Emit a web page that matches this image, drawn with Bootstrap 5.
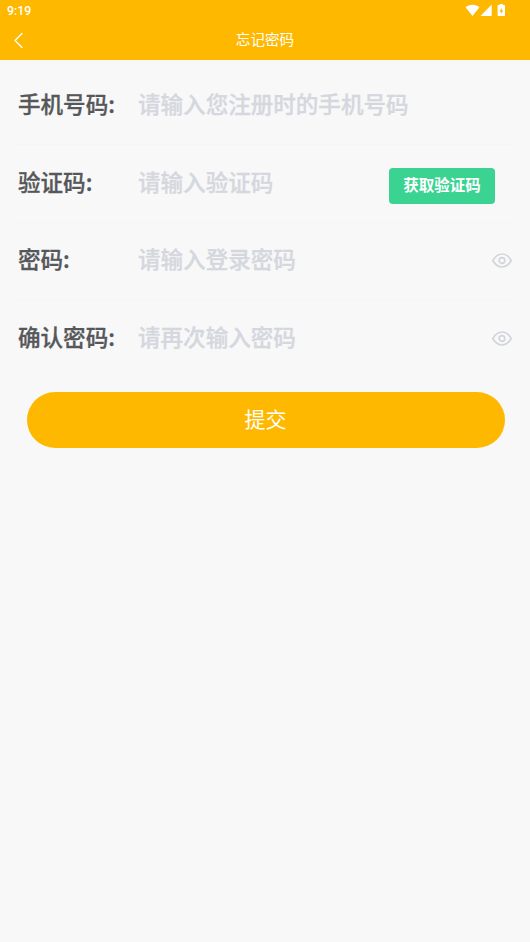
<!DOCTYPE html>
<html lang="zh-CN">
<head>
<meta charset="utf-8">
<meta name="viewport" content="width=device-width, initial-scale=1">
<title>忘记密码</title>
<link href="https://cdn.jsdelivr.net/npm/bootstrap@5.3.0/dist/css/bootstrap.min.css" rel="stylesheet">
<style>
  body { background: #f8f8f8; font-family: "Noto Sans CJK SC", sans-serif; min-height: 100vh; }
  .app-header { background: #ffb800; height: 60px; }
  .status-line { height: 21px; padding: 0 24px 0 7px; font: 500 12.4px/22px Roboto, sans-serif; }
  .status-icons svg { display: block; }
  .title-line { display: grid; grid-template-columns: 40px 1fr 40px; height: 39px; padding-bottom: 1px; }
  .page-title { font-size: 14.6px; line-height: 20px; padding-bottom: 2px; }
  .back-btn { margin-left: 13px; line-height: 0; }
  .reset-form { padding-top: 7.6px; }
  .field-row { height: 77.7px; margin: 0 18px; border-bottom: 1px solid #f5f5f5; padding-bottom: 6px; }
  .field-row.final { border-color: transparent; }
  .field-row label { width: 120px; color: #56575a; }
  .field-row label, .field-row .form-control { font-size: 22.55px; font-weight: 500; line-height: 34px; -webkit-text-stroke: .3px; }
  .field-row .form-control::placeholder { color: #d5d7de; opacity: 1; }
  .code-btn { width: 106px; height: 36px; background: #3ad392; border-radius: 4px; font-size: 15.5px; font-weight: 700; line-height: 33px; margin: 10.4px 17px 0 0; padding: 0 0 3px; }
  .eye-icon { margin-top: 4.5px; }
  .submit-btn { height: 56.5px; margin: 13.2px 25.5px 0 26.5px; background: #ffb800; font-size: 21px; line-height: 52px; padding: 0 0 4.5px; }
</style>
<script defer src="https://cdn.jsdelivr.net/npm/bootstrap@5.3.0/dist/js/bootstrap.bundle.min.js"></script>
</head>
<body>
<header class="app-header text-white">
  <div class="status-line d-flex justify-content-between">
    <span>9:19</span>
    <span class="status-icons pt-1">
      <svg width="41" height="13" viewBox="0 0 41 13" fill="#fff">
        <path d="M.5 3.2C4-.2 11.1-.2 14.5 3.2L7.500 12Z"/>
        <path d="M26.7.5V12H15.5Z"/>
        <path fill-rule="evenodd" d="M34.600 1V0h3.400v1h1.200q.8 0 .8.800v9.400q0 .8-.8.800h-5.800q-.8 0-.8-.8V1.800q0-.8.800-.8ZM36.800 3.800 34.500 7.400h1.400v2.700L38.200 6.500h-1.400Z"/>
      </svg>
    </span>
  </div>
  <div class="title-line align-items-center">
    <button type="button" class="btn border-0 p-0 text-start text-white back-btn" aria-label="返回">
      <svg width="11" height="17" viewBox="0 0 11 17" fill="none" stroke="#fff" stroke-width="1.4" stroke-linecap="round" stroke-linejoin="round"><path d="M9 1.500 2 8.500l7 7"/></svg>
    </button>
    <h1 class="page-title fw-normal text-center m-0">忘记密码</h1>
  </div>
</header>
<main>
  <form class="reset-form">
    <div class="field-row d-flex align-items-center">
      <label class="flex-shrink-0" for="phone">手机号码:</label>
      <input id="phone" type="tel" class="form-control border-0 bg-transparent p-0" placeholder="请输入您注册时的手机号码">
    </div>
    <div class="field-row d-flex align-items-center">
      <label class="flex-shrink-0" for="code">验证码:</label>
      <input id="code" type="text" class="form-control border-0 bg-transparent p-0" placeholder="请输入验证码">
      <button type="button" class="btn border-0 text-white flex-shrink-0 code-btn">获取验证码</button>
    </div>
    <div class="field-row d-flex align-items-center">
      <label class="flex-shrink-0" for="pwd">密码:</label>
      <input id="pwd" type="password" class="form-control border-0 bg-transparent p-0" placeholder="请输入登录密码">
      <svg class="flex-shrink-0 eye-icon" width="20" height="15" viewBox="0 0 20 15" fill="none" stroke="#d3d5dc" stroke-width="1.7"><path d="M.8 7.500Q4.500 1 10 1t9.200 6.500Q15.500 14 10 14T.8 7.500Z"/><circle cx="10" cy="7.5" r="2.8"/></svg>
    </div>
    <div class="field-row final d-flex align-items-center">
      <label class="flex-shrink-0" for="pwd2">确认密码:</label>
      <input id="pwd2" type="password" class="form-control border-0 bg-transparent p-0" placeholder="请再次输入密码">
      <svg class="flex-shrink-0 eye-icon" width="20" height="15" viewBox="0 0 20 15" fill="none" stroke="#d3d5dc" stroke-width="1.7"><path d="M.8 7.500Q4.500 1 10 1t9.200 6.500Q15.500 14 10 14T.8 7.500Z"/><circle cx="10" cy="7.5" r="2.8"/></svg>
    </div>
    <div class="d-grid">
      <button type="button" class="btn border-0 rounded-pill text-white submit-btn">提交</button>
    </div>
  </form>
</main>
</body>
</html>
